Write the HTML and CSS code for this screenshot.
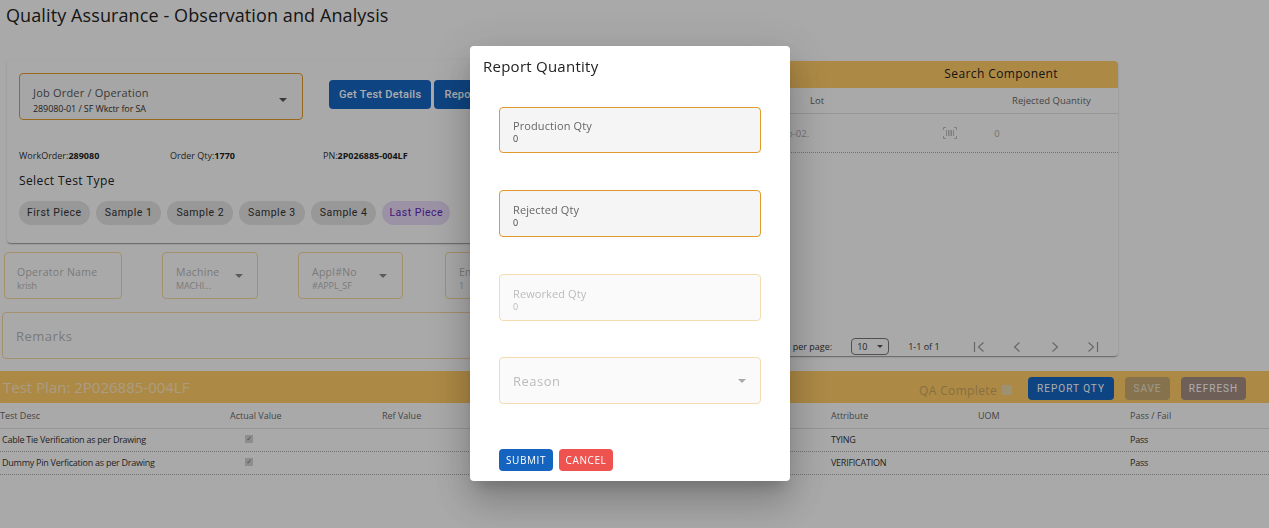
FILE: index.html
```html
<!DOCTYPE html>
<html lang="en">
<head>
  <meta charset="UTF-8">
  <meta name="viewport" content="width=device-width, initial-scale=1.0">
  <title>Quality Assurance - Observation and Analysis</title>
  <link rel="stylesheet" href="styles.css">
</head>
<body>
  <h1 class="page-title">Quality Assurance - Observation and Analysis</h1>

  <div class="top-grid">
    <div class="left-col">
      <section class="job-card">
        <div class="job-row">
          <div class="field field-job">
            <div class="field-text">
              <span class="field-label">Job Order / Operation</span>
              <span class="field-value">289080-01 / SF Wkctr for SA</span>
            </div>
            <span class="caret"></span>
          </div>
          <div class="job-buttons">
            <button class="btn btn-blue btn-get">Get Test Details</button>
            <button class="btn btn-blue btn-get">Report</button>
          </div>
        </div>
        <div class="info-row">
          <span class="info info-wo">WorkOrder:<b>289080</b></span>
          <span class="info info-qty">Order Qty:<b>1770</b></span>
          <span class="info">PN:<b>2P026885-004LF</b></span>
        </div>
        <div class="select-title">Select Test Type</div>
        <div class="chips">
          <span class="chip chip-first">First Piece</span>
          <span class="chip">Sample 1</span>
          <span class="chip">Sample 2</span>
          <span class="chip">Sample 3</span>
          <span class="chip">Sample 4</span>
          <span class="chip chip-last chip-active">Last Piece</span>
        </div>
      </section>

      <div class="fields-row">
        <div class="field field-faded field-operator">
          <div class="field-text">
            <span class="field-label">Operator Name</span>
            <span class="field-value">krish</span>
          </div>
        </div>
        <div class="field field-faded field-machine">
          <div class="field-text">
            <span class="field-label">Machine</span>
            <span class="field-value">MACHI...</span>
          </div>
          <span class="caret"></span>
        </div>
        <div class="field field-faded field-appl">
          <div class="field-text">
            <span class="field-label">Appl#No</span>
            <span class="field-value">#APPL_SF</span>
          </div>
          <span class="caret"></span>
        </div>
        <div class="field field-faded field-emp">
          <div class="field-text">
            <span class="field-label">Emp</span>
            <span class="field-value">1</span>
          </div>
        </div>
      </div>

      <div class="field field-faded field-remarks">
        <span class="remarks-label">Remarks</span>
      </div>
    </div>

    <section class="component-card">
      <div class="component-head">Search Component</div>
      <div class="component-cols">
        <span class="comp-lot">Lot</span>
        <span class="comp-rej">Rejected Quantity</span>
      </div>
      <div class="component-row">
        <span class="comp-lot-val">o-02.</span>
        <svg class="scan-icon" width="14" height="12" viewBox="0 0 14 12" fill="none" stroke="#bbb">
          <path d="M.5 3V.5H3M11 .5h2.500V3M13.500 9v2.500H11M3 11.500H.5V9"/>
          <path d="M3.500 3v6M5.500 3v6M7 3v6M8.500 3v6M10.500 3v6"/>
        </svg>
        <span class="comp-zero">0</span>
      </div>
      <div class="paginator">
        <span class="per-page">Items per page:</span>
        <span class="page-select">10<span class="caret caret-small"></span></span>
        <span class="page-range">1-1 of 1</span>
        <svg class="page-icon" width="12" height="12" viewBox="0 0 12 12"><path d="M1.500 1v10M10.500 1.500 5.500 6l5 4.500"/></svg>
        <svg class="page-icon" width="12" height="12" viewBox="0 0 12 12"><path d="M8.500 1.500 3.500 6l5 4.500"/></svg>
        <svg class="page-icon" width="12" height="12" viewBox="0 0 12 12"><path d="M3.500 1.500 8.500 6l-5 4.500"/></svg>
        <svg class="page-icon" width="12" height="12" viewBox="0 0 12 12"><path d="M1.500 1.500 6.500 6l-5 4.500M10.500 1v10"/></svg>
      </div>
    </section>
  </div>

  <section class="plan-band">
    <h2 class="plan-title">Test Plan: 2P026885-004LF</h2>
    <div class="plan-actions">
      <span class="qa-complete">QA Complete</span>
      <span class="qa-box"></span>
      <button class="btn btn-blue btn-plan btn-report">REPORT QTY</button>
      <button class="btn btn-plan btn-save">SAVE</button>
      <button class="btn btn-plan btn-refresh">REFRESH</button>
    </div>
  </section>

  <div class="plan-table">
    <div class="plan-row plan-head">
      <span>Test Desc</span><span>Actual Value</span><span>Ref Value</span><span></span>
      <span>Attribute</span><span>UOM</span><span>Pass / Fail</span>
    </div>
    <div class="plan-row">
      <span class="desc">Cable Tie Verification as per Drawing</span><span><i class="tick">✓</i></span><span></span><span></span>
      <span>TYING</span><span></span><span>Pass</span>
    </div>
    <div class="plan-row">
      <span class="desc">Dummy Pin Verfication as per Drawing</span><span><i class="tick">✓</i></span><span></span><span></span>
      <span>VERIFICATION</span><span></span><span>Pass</span>
    </div>
  </div>

  <div class="scrim"></div>

  <div class="modal">
    <h3 class="modal-title">Report Quantity</h3>
    <div class="modal-fields">
      <div class="qty-field qty-first">
        <span class="qty-label">Production Qty</span>
        <span class="qty-value">0</span>
      </div>
      <div class="qty-field">
        <span class="qty-label">Rejected Qty</span>
        <span class="qty-value">0</span>
      </div>
      <div class="qty-field qty-disabled">
        <span class="qty-label">Reworked Qty</span>
        <span class="qty-value">0</span>
      </div>
      <div class="qty-field qty-disabled qty-select">
        <span class="reason-label">Reason</span>
        <span class="caret"></span>
      </div>
    </div>
    <div class="modal-actions">
      <button class="btn btn-submit">SUBMIT</button>
      <button class="btn btn-cancel">CANCEL</button>
    </div>
  </div>
</body>
</html>
```

FILE: styles.css
```css
* {
  box-sizing: border-box;
}
body {
  margin: 0;
  height: 528px;
  overflow: hidden;
  font-family: "Open Sans", sans-serif;
  background-color: #fafafa;
  color: #222;
}
.page-title {
  margin: 0;
  padding: 2px 0 0 6px;
  height: 60px;
  font-size: 18px;
  font-weight: 400;
  line-height: 26px;
  letter-spacing: 0.1px;
}
.top-grid {
  display: grid;
  grid-template-columns: 476px 642px;
  height: 311px;
}
.left-col {
  padding-left: 2px;
}
.job-card {
  height: 183px;
  margin-left: 5px;
  padding: 13px 12px;
  border-radius: 4px;
  box-shadow: 0 2px 1px -1px rgba(0,0,0,0.2), 0 1px 1px rgba(0,0,0,0.14), 0 1px 3px rgba(0,0,0,0.12);
}
.job-row {
  display: flex;
  align-items: center;
  gap: 26px;
}
.field {
  display: flex;
  flex: none;
  align-items: center;
  justify-content: space-between;
  border: 1px solid #e09a2a;
  border-radius: 4px;
}
.field-text {
  display: flex;
  flex-direction: column;
  white-space: nowrap;
}
.field-label {
  font-size: 11px;
  line-height: 15px;
  letter-spacing: 0.2px;
  color: #555;
}
.field-value {
  font-size: 9px;
  line-height: 12px;
  letter-spacing: -0.1px;
  color: #333;
}
.caret {
  flex: none;
  width: 0;
  height: 0;
  border-left: 4px solid transparent;
  border-right: 4px solid transparent;
  border-top: 4px solid #555;
}
.field-job {
  width: 284px;
  height: 47px;
  padding: 6px 15px 0 13px;
  background-color: #f5f5f5;
}
.field-job .field-value {
  margin-top: 3px;
}
.job-buttons {
  display: flex;
  flex: none;
  gap: 3px;
  margin-bottom: 4px;
}
.btn {
  border: none;
  border-radius: 4px;
  color: #fff;
  font-family: Roboto, sans-serif;
  white-space: nowrap;
}
.btn-blue {
  background-color: #1565c0;
}
.btn-get {
  height: 29px;
  padding: 0 10px;
  font-size: 11px;
  font-weight: 500;
  letter-spacing: 0.3px;
}
.info-row {
  display: flex;
  margin-top: 29px;
  font-size: 9px;
  line-height: 14px;
  color: #333;
}
.info b {
  color: #222;
}
.info-wo {
  width: 151px;
}
.info-qty {
  width: 153px;
}
.select-title {
  margin-top: 9px;
  font-size: 12px;
  line-height: 18px;
  letter-spacing: 0.4px;
}
.chips {
  display: flex;
  gap: 6px;
  margin-top: 11px;
}
.chip {
  height: 24px;
  padding: 0 9px;
  border-radius: 12px;
  background-color: #e0e0e0;
  font-family: Roboto, sans-serif;
  font-size: 10.5px;
  line-height: 24px;
  letter-spacing: 0.5px;
  color: #333;
  white-space: nowrap;
}
.chip-first {
  padding: 0 8px;
}
.chip-last {
  padding: 0 7px;
}
.chip-active {
  background-color: #e5d8f5;
  color: #5e1fb5;
}
.fields-row {
  display: flex;
  margin-top: 9px;
  padding-left: 2px;
}
.field-faded {
  border-color: #f2d49e;
}
.field-faded .field-text {
  padding-top: 5px;
}
.field-faded .field-label {
  font-size: 10.5px;
  letter-spacing: 0.25px;
  color: #b4b4b4;
}
.field-faded .field-value {
  color: #b4b4b4;
}
.field-faded .caret {
  border-top-color: #888;
}
.field-operator {
  width: 118px;
  height: 47px;
  margin-right: 40px;
  padding: 0 12px;
}
.field-machine {
  width: 96px;
  height: 47px;
  margin-right: 40px;
  padding: 0 14px 0 13px;
}
.field-appl {
  width: 105px;
  height: 47px;
  margin-right: 42px;
  padding: 0 15px 0 13px;
}
.field-emp {
  width: 100px;
  height: 47px;
  padding: 0 13px;
}
.field-remarks {
  height: 47px;
  margin-top: 13px;
  padding: 0 13px;
}
.remarks-label {
  font-size: 13px;
  letter-spacing: 0.5px;
  color: #b4b4b4;
}
.component-card {
  height: 295px;
  margin-top: 1px;
  display: flex;
  flex-direction: column;
  border-radius: 4px;
  box-shadow: 0 2px 1px -1px rgba(0,0,0,0.2), 0 1px 1px rgba(0,0,0,0.14), 0 1px 3px rgba(0,0,0,0.12);
}
.component-head {
  height: 27px;
  padding-right: 60px;
  border-radius: 4px 4px 0 0;
  background-color: #ffcb67;
  font-size: 12px;
  line-height: 25px;
  letter-spacing: 0.4px;
  text-align: right;
}
.component-cols {
  display: flex;
  height: 26px;
  align-items: center;
  padding-left: 334px;
  border-bottom: 1px solid #ddd;
  font-size: 9.500px;
  color: #666;
}
.comp-rej {
  margin-left: 188px;
}
.component-row {
  display: flex;
  align-items: center;
  height: 39px;
  padding-left: 311px;
  border-bottom: 1px dotted #aaa;
  font-size: 9.500px;
  color: #aaa;
}
.scan-icon {
  margin-left: 134px;
}
.comp-zero {
  margin-left: 37px;
}
.paginator {
  display: flex;
  align-items: center;
  margin-top: auto;
  height: 19px;
  padding-left: 291px;
  font-size: 9px;
  color: #333;
  white-space: nowrap;
}
.per-page, .page-range, .page-icon {
  flex: none;
}
.page-select {
  display: flex;
  flex: none;
  align-items: center;
  justify-content: space-between;
  width: 38px;
  height: 17px;
  margin-left: 19px;
  padding: 0 5px;
  border: 1px solid #777;
  border-radius: 4px;
}
.caret-small {
  border-left-width: 3px;
  border-right-width: 3px;
  border-top-width: 3px;
}
.page-range {
  margin: 0 33px 0 19px;
}
.page-icon {
  margin-right: 26px;
  fill: none;
  stroke: #999;
  stroke-width: 1.2;
}
.plan-band {
  display: flex;
  align-items: center;
  justify-content: space-between;
  height: 32px;
  background-color: #ffcb67;
}
.plan-title {
  margin: 0;
  padding-left: 3px;
  font-size: 15px;
  font-weight: 400;
  color: #fbe6c0;
}
.plan-actions {
  display: flex;
  align-items: center;
  padding-right: 23px;
}
.qa-complete {
  margin-top: 6px;
  font-size: 12px;
  letter-spacing: 0.35px;
  color: #c9a45e;
}
.qa-box {
  width: 10px;
  height: 10px;
  margin: 6px 16px 0 5px;
  background-color: #e8d6a8;
}
.btn-plan {
  height: 23px;
  margin-top: 2px;
  font-size: 10px;
  letter-spacing: 1px;
}
.btn-report {
  width: 86px;
}
.btn-save {
  width: 45px;
  margin-left: 11px;
  margin-right: 11px;
  background-color: #c6aa74;
  color: #e6e0d0;
}
.btn-refresh {
  width: 65px;
  background-color: #a38c84;
}
.plan-row {
  display: grid;
  grid-template-columns: 230px 152px 265px 184px 147px 152px 1fr;
  align-items: center;
  height: 23px;
  padding-bottom: 2px;
  border-bottom: 1px dotted #aaa;
  font-size: 9px;
  letter-spacing: -0.25px;
  color: #333;
}
.plan-head {
  height: 26px;
  padding-bottom: 0;
  border-bottom: 1px solid #ddd;
  letter-spacing: 0;
  color: #666;
}
.desc {
  padding-left: 2px;
}
.tick {
  display: block;
  width: 8px;
  height: 8px;
  margin-left: 15px;
  background-color: #d0d0d0;
  color: #777;
  font-family: "DejaVu Sans", sans-serif;
  font-size: 7px;
  font-style: normal;
  line-height: 8px;
  text-align: center;
}
.scrim {
  position: fixed;
  inset: 0;
  background-color: rgba(0,0,0,0.32);
}
.modal {
  position: fixed;
  left: 470px;
  top: 46px;
  width: 320px;
  height: 435px;
  padding: 9px 13px 10px;
  border-radius: 4px;
  background-color: #fff;
  box-shadow: 0 11px 15px -7px rgba(0,0,0,0.2), 0 24px 38px 3px rgba(0,0,0,0.14), 0 9px 46px 8px rgba(0,0,0,0.12);
}
.modal-title {
  margin: 0;
  font-size: 15px;
  font-weight: 400;
  line-height: 22px;
  letter-spacing: 0.25px;
}
.modal-fields {
  display: flex;
  flex-direction: column;
  gap: 37px;
  margin-top: 30px;
  padding: 0 16px;
}
.qty-field {
  display: flex;
  flex-direction: column;
  justify-content: center;
  height: 47px;
  padding: 4px 13px 0;
  border: 1px solid #e09a2a;
  border-radius: 4px;
  background-color: #f5f5f5;
}
.qty-first {
  height: 46px;
  padding-top: 3px;
}
.qty-label {
  font-size: 11px;
  line-height: 14px;
  letter-spacing: 0.1px;
  color: #666;
}
.qty-value {
  font-size: 9px;
  line-height: 11px;
  color: #444;
}
.qty-disabled {
  border-color: #f4dcb0;
  background-color: #fafafa;
}
.qty-disabled .qty-label, .qty-disabled .qty-value {
  color: #bbb;
}
.qty-select {
  flex-direction: row;
  align-items: center;
  justify-content: space-between;
  margin-top: -1px;
  padding: 0 14px 0 13px;
}
.reason-label {
  font-size: 13px;
  letter-spacing: 0.5px;
  color: #bbb;
}
.qty-select .caret {
  border-top-color: #aaa;
}
.modal-actions {
  display: flex;
  gap: 6px;
  margin-top: 45px;
  padding-left: 16px;
}
.btn-submit, .btn-cancel {
  width: 54px;
  height: 22px;
  padding: 0;
  font-family: "Open Sans", sans-serif;
  font-size: 10px;
  letter-spacing: 0.6px;
}
.btn-submit {
  background-color: #1565c0;
}
.btn-cancel {
  background-color: #ef5350;
}
```
